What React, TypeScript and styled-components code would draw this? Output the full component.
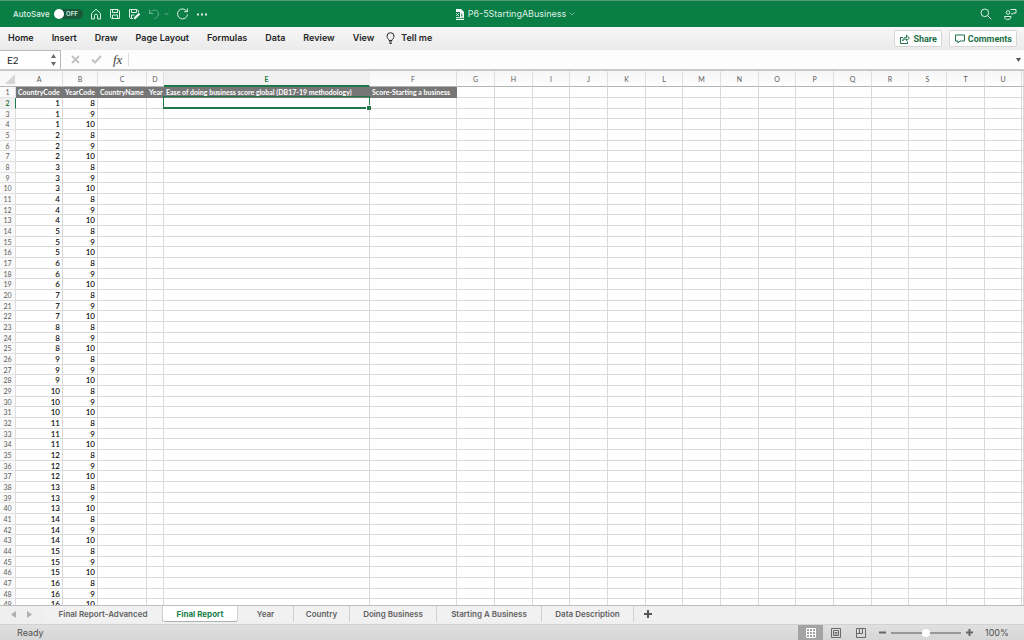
import React from "react";
import styled, { createGlobalStyle } from "styled-components";

const ui = `Inter, "Liberation Sans", sans-serif`;
const cellFont = `Lato, "Open Sans", sans-serif`;

const GlobalStyle = createGlobalStyle`
  *, *::before, *::after { box-sizing: border-box; }
  html, body { margin: 0; height: 100%; }
  #root { height: 100%; }
  button, input { font: inherit; color: inherit; margin: 0; }
`;

const Window = styled.div`
  display: flex;
  flex-direction: column;
  height: 100vh;
  overflow: hidden;
  background: #ececec;
  color: #262626;
  font: 9px/12px ${ui};
`;

const IconButton = styled.button<{ $dim?: boolean }>`
  display: flex;
  align-items: center;
  justify-content: center;
  padding: 0;
  border: 0;
  background: none;
  opacity: ${(p) => (p.$dim ? 0.45 : 1)};
  svg { display: block; }
`;

/* Title bar */
const TitleBar = styled.header`
  display: grid;
  grid-template-columns: 1fr auto 1fr;
  align-items: center;
  flex: none;
  height: 27px;
  padding: 0 7px 0 13px;
  border-top: 1px solid #4fa079;
  background: #0b7e46;
  color: #dcefe5;
`;

const QuickAccess = styled.div`
  display: flex;
  align-items: center;
  gap: 7px;
`;

const UndoGroup = styled.div`
  display: flex;
  align-items: center;
  gap: 4px;
`;

const AutoSave = styled.label`
  position: relative;
  display: flex;
  align-items: center;
  gap: 4px;
  font-size: 8px;
  font-weight: 500;
`;

const Switch = styled.input`
  appearance: none;
  width: 29px;
  height: 10px;
  border-radius: 5px;
  background: #17573a;
  &::before {
    content: "";
    display: block;
    width: 10px;
    height: 10px;
    border-radius: 50%;
    background: #fff;
  }
`;

const SwitchState = styled.span`
  position: absolute;
  right: 5px;
  font-size: 6px;
  font-weight: 600;
  line-height: 10px;
`;

const FileTitle = styled.h1`
  display: flex;
  align-items: center;
  gap: 3px;
  margin: 0;
  font-size: 9px;
  font-weight: 400;
`;

const TitleActions = styled.div`
  display: flex;
  justify-content: flex-end;
  gap: 12px;
`;

/* Ribbon */
const Ribbon = styled.div`
  display: flex;
  align-items: center;
  gap: 12px;
  flex: none;
  height: 23px;
  padding: 0 7px 0 8px;
  background: linear-gradient(#f6f6f6, #ebebeb);
`;

const RibbonTabs = styled.nav`
  display: flex;
  gap: 18px;
  padding-bottom: 2px;
`;

const RibbonTab = styled.button`
  padding: 0;
  border: 0;
  background: none;
  font-weight: 600;
`;

const TellMe = styled(RibbonTab)`
  display: flex;
  align-items: center;
  gap: 6px;
  padding-bottom: 2px;
`;

const RibbonActions = styled.div`
  display: flex;
  gap: 7px;
  margin-left: auto;
`;

const ActionButton = styled.button`
  display: flex;
  align-items: center;
  gap: 3px;
  height: 17px;
  padding: 0 4px 0 5px;
  border: 1px solid #d6d6d6;
  border-radius: 2px;
  background: #fff;
  color: #1b7046;
  font-family: Roboto, sans-serif;
  font-weight: 700;
`;

/* Formula bar */
const FormulaBar = styled.div`
  display: flex;
  align-items: stretch;
  flex: none;
  height: 21px;
  border-bottom: 2px solid #c9c9c9;
  background: #fdfdfd;
`;

const NameBox = styled.div`
  display: flex;
  align-items: center;
  width: 61px;
  padding: 0 4px 0 7px;
  border: 1px solid #b9b9b9;
  border-left: 0;
  border-bottom: 0;
  background: #fff;
`;

const NameInput = styled.input`
  flex: 1;
  min-width: 0;
  padding: 0;
  border: 0;
  background: none;
  font: 10px/14px ${cellFont};
`;

const FormulaTools = styled.div`
  display: flex;
  align-items: center;
  gap: 11px;
  margin: 3px 0;
  padding: 0 6px 0 10px;
  border-right: 1px solid #dcdcdc;
`;

const FunctionButton = styled(IconButton)`
  color: #3d3d3d;
  font: italic 13px/14px "Liberation Serif", serif;
`;

const FormulaInput = styled.input`
  flex: 1;
  min-width: 0;
  padding: 0 6px;
  border: 0;
  background: none;
  font: 10px/14px ${cellFont};
`;

const ExpandButton = styled(IconButton)`
  width: 11px;
`;

/* Sheet */
const SheetArea = styled.main`
  flex: 1;
  min-height: 0;
  overflow: hidden;
  background: #fff;
`;

const Sheet = styled.table`
  width: 100%;
  table-layout: fixed;
  border-collapse: separate;
  border-spacing: 0;
  color: #000;
  font: 8px/8px ${cellFont};
`;

const Col = styled.col<{ $width?: number }>`
  width: ${(p) => (p.$width ? `${p.$width}px` : "auto")};
`;

const ColumnHead = styled.th<{ $selected?: boolean }>`
  height: 16px;
  padding: ${(p) => (p.$selected ? "1px 0 0" : "0")};
  border-right: 1px solid ${(p) => (p.$selected ? "#f0f0f0" : "#dedede")};
  border-bottom: ${(p) => (p.$selected ? "2px solid #1d7a48" : "1px solid #b4b4b4")};
  background: ${(p) => (p.$selected ? "#f0f0f0" : "linear-gradient(#f6f6f6, #fdfdfd)")};
  color: ${(p) => (p.$selected ? "#1d7a48" : "#5a5a5a")};
  font-size: 7px;
  font-weight: ${(p) => (p.$selected ? 700 : 400)};
`;

const Corner = styled.td`
  padding: 0 1px 0 0;
  border-bottom: 1px solid #b4b4b4;
  background: #f8f8f8;
  svg { display: block; margin-left: auto; }
`;

const Row = styled.tr`
  height: 11px;
  &:nth-child(3n) { height: 10px; }
`;

const RowHead = styled.th<{ $selected?: boolean }>`
  padding: 0;
  border-right: 1px solid ${(p) => (p.$selected ? "#1d7a48" : "#dedede")};
  border-bottom: 1px solid #e2e2e2;
  background: ${(p) => (p.$selected ? "#f0f0f0" : "#fafafa")};
  color: ${(p) => (p.$selected ? "#1d7a48" : "#5a5a5a")};
  font-size: 7px;
  font-weight: ${(p) => (p.$selected ? 700 : 400)};
`;

const Cell = styled.td`
  position: relative;
  padding: 0 2px 0 0;
  border-right: 1px solid #d9d9d9;
  border-bottom: 1px solid #d9d9d9;
  text-align: right;
  font-weight: 500;
`;

const TitleCell = styled(Cell)`
  padding: 0 0 0 2px;
  border-color: #767676;
  background: #767676;
  color: #fff;
  font-size: 7px;
  font-weight: 700;
  text-align: left;
  white-space: nowrap;
`;

const Selection = styled.span`
  position: absolute;
  z-index: 1;
  inset: -2px -1px -1px -1px;
  border: 1px solid #1d7a48;
  border-bottom-width: 2px;
  &::after {
    content: "";
    position: absolute;
    right: -2px;
    bottom: -3px;
    width: 5px;
    height: 5px;
    border: solid #fff;
    border-width: 1px 0 0 1px;
    background: #1d7a48;
  }
`;

/* Sheet tabs */
const SheetTabs = styled.nav`
  display: flex;
  flex: none;
  height: 19px;
  border-top: 1px solid #bdbdbd;
  background: #efefef;
`;

const TabArrows = styled.div`
  display: flex;
  align-items: center;
  gap: 11px;
  width: 44px;
  padding: 0 11px 2px;
`;

const SheetTab = styled.button<{ $width: number; $active?: boolean }>`
  width: ${(p) => p.$width}px;
  height: 16px;
  padding: 0;
  border: 0;
  border-right: 1px solid #d0d0d0;
  border-bottom: ${(p) => (p.$active ? "1px solid #b0b0b0" : "0")};
  border-radius: ${(p) => (p.$active ? "0 0 3px 3px" : "0")};
  background: ${(p) => (p.$active ? "#fff" : "#f1f1f1")};
  color: ${(p) => (p.$active ? "#17804a" : "#626262")};
  font-size: 8px;
  font-weight: ${(p) => (p.$active ? 700 : 600)};
  white-space: nowrap;
`;

const AddTab = styled(IconButton)`
  width: 27px;
  height: 16px;
`;

/* Status bar */
const StatusBar = styled.footer`
  display: flex;
  align-items: center;
  justify-content: space-between;
  flex: none;
  height: 16px;
  padding: 0 16px 0 17px;
  border-top: 1px solid #d2d2d2;
  background: linear-gradient(#e0e0e0, #d6d6d6);
  color: #505050;
`;

const ViewTools = styled.div`
  display: flex;
  align-items: center;
`;

const ViewButton = styled(IconButton)<{ $active?: boolean }>`
  width: 25px;
  height: 16px;
  background: ${(p) => (p.$active ? "#a3a3a3" : "none")};
`;

const ZoomControl = styled.div`
  display: flex;
  align-items: center;
  gap: 5px;
  margin-left: 6px;
`;

const ZoomSlider = styled.input`
  appearance: none;
  width: 70px;
  height: 10px;
  background: linear-gradient(#989898, #989898) center / 100% 2px no-repeat;
  &::-webkit-slider-thumb {
    appearance: none;
    width: 8px;
    height: 8px;
    border-radius: 50%;
    background: #fff;
  }
`;

const ZoomValue = styled.output`
  width: 23px;
  margin-left: 7px;
  white-space: nowrap;
  text-align: right;
`;

type IconProps = {
  w: number;
  h: number;
  color?: string;
  stroke?: number;
  children: React.ReactNode;
};

const Icon = ({ w, h, color = "currentColor", stroke = 1, children }: IconProps) => (
  <svg width={w} height={h} viewBox={`0 0 ${w} ${h}`} fill="none" stroke={color} strokeWidth={stroke} aria-hidden="true">
    {children}
  </svg>
);

const Triangle = ({ w, h, d, color }: { w: number; h: number; d: string; color: string }) => (
  <svg width={w} height={h} viewBox={`0 0 ${w} ${h}`} fill={color} aria-hidden="true">
    <path d={d} />
  </svg>
);

const ribbonTabs = ["Home", "Insert", "Draw", "Page Layout", "Formulas", "Data", "Review", "View"];

const columns = [
  { name: "A", width: 47, title: "CountryCode" },
  { name: "B", width: 35, title: "YearCode" },
  { name: "C", width: 49, title: "CountryName" },
  { name: "D", width: 17, title: "Year" },
  { name: "E", width: 206, title: "Ease of doing business score global (DB17-19 methodology)" },
  { name: "F", width: 87, title: "Score-Starting a business" },
  ..."GHIJKLMNOPQRSTU".split("").map((name, i) => ({ name, width: i % 3 === 2 ? 37 : 38, title: "" })),
];

const rows = Array.from({ length: 48 }, (_, i) => ({
  number: i + 2,
  country: Math.floor(i / 3) + 1,
  year: 8 + (i % 3),
}));

const sheetTabs = [
  { name: "Final Report-Advanced", width: 119 },
  { name: "Final Report", width: 75, active: true },
  { name: "Year", width: 56 },
  { name: "Country", width: 56 },
  { name: "Doing Business", width: 87 },
  { name: "Starting A Business", width: 105 },
  { name: "Data Description", width: 92 },
];

export default function App() {
  return (
    <Window>
      <GlobalStyle />
      <TitleBar>
        <QuickAccess>
          <AutoSave>
            AutoSave
            <Switch type="checkbox" role="switch" />
            <SwitchState>OFF</SwitchState>
          </AutoSave>
          <IconButton aria-label="Home">
            <Icon w={12} h={12}><path d="M1.5 5.3 6 1.2l4.500 4.100v5.700H7.600V7.800a1.600 1.600 0 0 0-3.200 0V11H1.500Z" /></Icon>
          </IconButton>
          <IconButton aria-label="Save">
            <Icon w={12} h={12}><path d="M1.500 1.500h7.500l1.500 1.500v7.500H2.500l-1-1Z M3.500 1.500v3h5v-3 M3.500 10.500V7h5v3.500" /></Icon>
          </IconButton>
          <IconButton aria-label="Save a copy">
            <Icon w={13} h={12}><path d="M5 10.500H2.500l-1-1v-8H9L10.500 3v1.500 M3.500 1.500v3h5v-3 M3.500 10.500V7h3" /><path d="m6.300 10.700 5.200-5.200" stroke="#fff" strokeWidth={2.2} /></Icon>
          </IconButton>
          <UndoGroup>
            <IconButton aria-label="Undo" $dim>
              <Icon w={12} h={12}><path d="M1.500 1.500v4h4 M1.700 5.300C4 1.800 7.200 1.300 9.200 3s1.600 4 0 5.500L6.500 11.200" /></Icon>
            </IconButton>
            <IconButton aria-label="Undo history" $dim>
              <Icon w={5} h={4}><path d="m.5.8 2 2 2-2" /></Icon>
            </IconButton>
          </UndoGroup>
          <IconButton aria-label="Redo">
            <Icon w={13} h={12}><path d="M10.900 3.500A5 5 0 1 0 11.500 6.500 M11.400.5v3.200H8.200" /></Icon>
          </IconButton>
          <IconButton aria-label="More commands">
            <Icon w={11} h={3} stroke={2}><path d="M1 1.500h2M5 1.500h2M9 1.500h2" /></Icon>
          </IconButton>
        </QuickAccess>
        <FileTitle>
          <svg width="10" height="11" viewBox="0 0 10 11" aria-hidden="true">
            <path d="M1 0h5l3 3v8H1Z" fill="#fff" />
            <path d="M0 3h5v5H0Z" fill="#0b7e46" />
            <path d="m1.200 4.200 2.600 2.800M3.800 4.200 1.200 7" stroke="#cfe6da" fill="none" />
            <path d="M6.800 4.500v3M1 9.300h8" stroke="#0b7e46" fill="none" />
          </svg>
          P6-5StartingABusiness
          <IconButton aria-label="File options" $dim>
            <Icon w={6} h={4}><path d="m.5.5 2.500 2.500 2.500-2.500" /></Icon>
          </IconButton>
        </FileTitle>
        <TitleActions>
          <IconButton aria-label="Search">
            <Icon w={12} h={12}><circle cx="4.800" cy="4.800" r="3.800" /><path d="m7.600 7.600 3.600 3.600" /></Icon>
          </IconButton>
          <IconButton aria-label="Account and feedback">
            <Icon w={13} h={12}><circle cx="4" cy="4.500" r="1.800" /><path d="M.5 8.500h6.500c0 2-1 3-3.200 3S.5 10.500.5 8.500Z M6.500 1.500h5.500v3.500H9.500L8 6.500V5" /></Icon>
          </IconButton>
        </TitleActions>
      </TitleBar>

      <Ribbon>
        <RibbonTabs aria-label="Ribbon">
          {ribbonTabs.map((t) => <RibbonTab key={t}>{t}</RibbonTab>)}
        </RibbonTabs>
        <TellMe>
          <Icon w={9} h={12}><path d="M3 8.500C3 7 1 6.500 1 4.200a3.500 3.500 0 0 1 7 0C8 6.500 6 7 6 8.500Z M3 10h3 M3.500 11.500h2" /></Icon>
          Tell me
        </TellMe>
        <RibbonActions>
          <ActionButton>
            <Icon w={10} h={10}><path d="M3 3.500H.5v6h7V7.500 M2.500 7c.3-2.500 1.800-3.500 4-3.500V1.200L9.400 4 6.500 6.700V5C4.800 5 3.500 5.500 2.500 7Z" /></Icon>
            Share
          </ActionButton>
          <ActionButton>
            <Icon w={10} h={10}><path d="M.5 1h9v6H5L3 9V7H.5Z" /></Icon>
            Comments
          </ActionButton>
        </RibbonActions>
      </Ribbon>

      <FormulaBar>
        <NameBox>
          <NameInput aria-label="Name box" defaultValue="E2" />
          <IconButton aria-label="Named ranges">
            <Triangle w={5} h={12} d="M2.500 0 5 4H0ZM0 8h5l-2.500 4Z" color="#666" />
          </IconButton>
        </NameBox>
        <FormulaTools>
          <IconButton aria-label="Cancel">
            <Icon w={9} h={9} color="#c4c4c4" stroke={2}><path d="m1 1 7 7M8 1 1 8" /></Icon>
          </IconButton>
          <IconButton aria-label="Enter">
            <Icon w={11} h={9} color="#c4c4c4" stroke={2}><path d="m1 4.500 3 3L10 1" /></Icon>
          </IconButton>
          <FunctionButton aria-label="Insert function">fx</FunctionButton>
        </FormulaTools>
        <FormulaInput aria-label="Formula" />
        <ExpandButton aria-label="Expand formula bar">
          <Triangle w={5} h={4} d="M0 0h5L2.500 4Z" color="#555" />
        </ExpandButton>
      </FormulaBar>

      <SheetArea>
        <Sheet>
          <colgroup>
            <Col $width={16} />
            {columns.map((c) => <Col key={c.name} $width={c.width} />)}
            <Col />
          </colgroup>
          <thead>
            <tr>
              <Corner>
                <Triangle w={10} h={10} d="M10 0v10H0Z" color="#d6d6d6" />
              </Corner>
              {columns.map((c) => (
                <ColumnHead key={c.name} scope="col" $selected={c.name === "E"}>{c.name}</ColumnHead>
              ))}
              <ColumnHead as="td" />
            </tr>
          </thead>
          <tbody>
            <Row>
              <RowHead scope="row">1</RowHead>
              {columns.map((c) => (c.title ? <TitleCell key={c.name}>{c.title}</TitleCell> : <Cell key={c.name} />))}
              <Cell />
            </Row>
            {rows.map((r) => (
              <Row key={r.number}>
                <RowHead scope="row" $selected={r.number === 2}>{r.number}</RowHead>
                {columns.map((c) => (
                  <Cell key={c.name}>
                    {c.name === "A" && r.country}
                    {c.name === "B" && r.year}
                    {c.name === "E" && r.number === 2 && <Selection />}
                  </Cell>
                ))}
                <Cell />
              </Row>
            ))}
          </tbody>
        </Sheet>
      </SheetArea>

      <SheetTabs aria-label="Sheets">
        <TabArrows>
          <IconButton aria-label="Previous sheet">
            <Triangle w={5} h={7} d="M5 0v7L0 3.500Z" color="#b0b0b0" />
          </IconButton>
          <IconButton aria-label="Next sheet">
            <Triangle w={5} h={7} d="M0 0v7l5-3.500Z" color="#b0b0b0" />
          </IconButton>
        </TabArrows>
        {sheetTabs.map((t) => (
          <SheetTab key={t.name} $width={t.width} $active={t.active}>{t.name}</SheetTab>
        ))}
        <AddTab aria-label="Add sheet">
          <Icon w={8} h={8} color="#555" stroke={2}><path d="M4 0v8M0 4h8" /></Icon>
        </AddTab>
      </SheetTabs>

      <StatusBar>
        <span>Ready</span>
        <ViewTools>
          <ViewButton aria-label="Normal view" $active>
            <Icon w={10} h={10} color="#fff"><path d="M.5.5h9v9h-9ZM3.500.5v9M6.500.5v9M.5 3.500h9M.5 6.500h9" /></Icon>
          </ViewButton>
          <ViewButton aria-label="Page layout view">
            <Icon w={10} h={10} color="#6a6a6a"><path d="M.5.5h9v9h-9ZM2.500 2.500h5v5h-5ZM3.500 4.500h3M3.500 6h3" /></Icon>
          </ViewButton>
          <ViewButton aria-label="Page break view">
            <Icon w={10} h={10} color="#6a6a6a"><path d="M.5.5h9v9h-9ZM.5 5.500h6M3.500.5v5M6.500.5v5" /></Icon>
          </ViewButton>
          <ZoomControl>
            <IconButton aria-label="Zoom out">
              <Icon w={7} h={7} color="#666" stroke={2}><path d="M0 3.500h7" /></Icon>
            </IconButton>
            <ZoomSlider type="range" aria-label="Zoom" min={0} max={100} defaultValue={50} />
            <IconButton aria-label="Zoom in">
              <Icon w={7} h={7} color="#666" stroke={2}><path d="M0 3.500h7M3.500 0v7" /></Icon>
            </IconButton>
            <ZoomValue>100%</ZoomValue>
          </ZoomControl>
        </ViewTools>
      </StatusBar>
    </Window>
  );
}
